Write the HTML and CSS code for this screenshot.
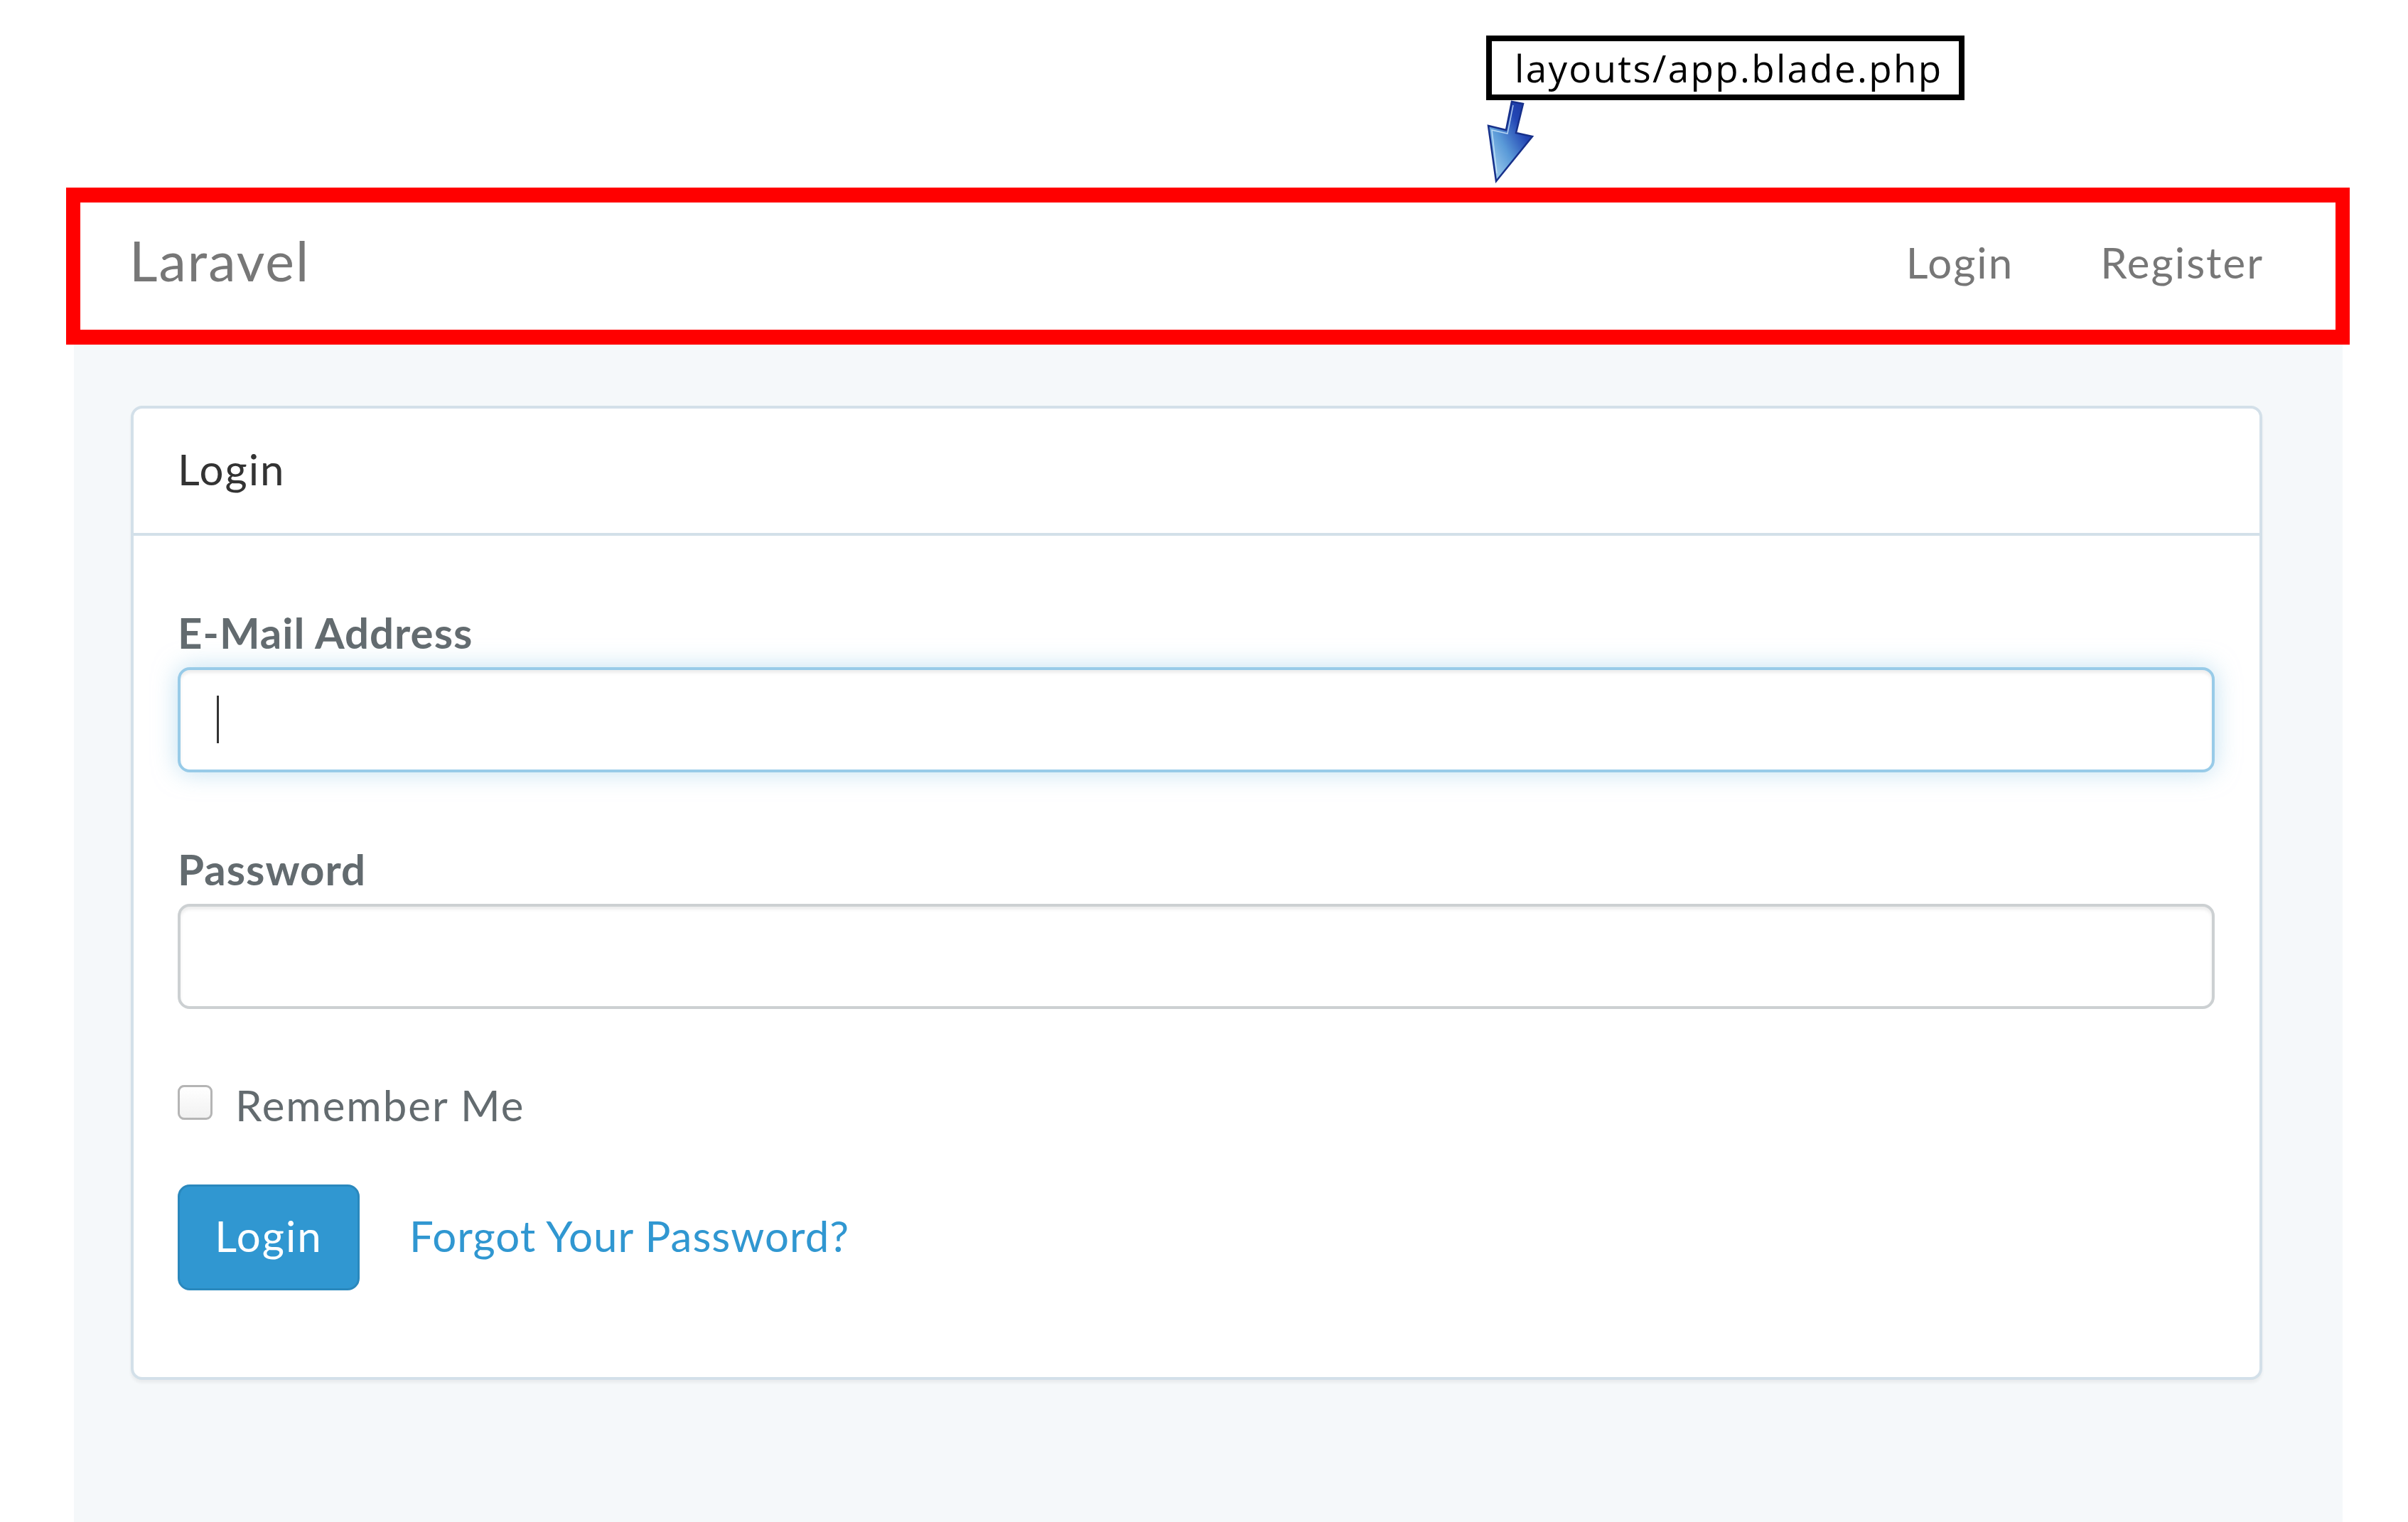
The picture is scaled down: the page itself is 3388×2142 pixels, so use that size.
FILE: index.html
```html
<!DOCTYPE html>
<html lang="en">
<head>
<meta charset="utf-8">
<title>Laravel – Login</title>
<link rel="stylesheet" href="styles.css">
</head>
<body>
<div class="shot">
  <div class="callout">layouts/app.blade.php</div>
  <svg class="arrow" viewBox="0 0 70 125" width="70" height="125" aria-hidden="true">
    <defs>
      <linearGradient id="arrowFill" x1="0" y1="1" x2="1" y2="0">
        <stop offset="0" stop-color="#b4dcf4"/>
        <stop offset="0.4" stop-color="#5a9ad8"/>
        <stop offset="0.7" stop-color="#2346b4"/>
        <stop offset="1" stop-color="#1a3399"/>
      </linearGradient>
    </defs>
    <polygon points="15,117 4,39 29,45 37,5 53,8 43,49 66,54" fill="url(#arrowFill)" stroke="#17308a" stroke-width="2.5" stroke-linejoin="miter"/>
    <polyline points="16,106 9,45 31,50 39,10" fill="none" stroke="#cfe8fb" stroke-width="1.5" opacity="0.8"/>
  </svg>

  <div class="app">
    <nav class="navbar">
      <a class="brand" href="#">Laravel</a>
      <ul class="nav-right">
        <li><a class="nav-link" href="#">Login</a></li>
        <li><a class="nav-link" href="#">Register</a></li>
      </ul>
    </nav>

    <main class="content">
      <section class="panel">
        <div class="panel-heading">Login</div>
        <form class="panel-body">
          <div class="form-group">
            <label class="label" for="email">E-Mail Address</label>
            <div class="field">
              <input id="email" class="control control-focus" type="email" name="email">
              <span class="caret"></span>
            </div>
          </div>

          <div class="form-group form-group-next">
            <label class="label" for="password">Password</label>
            <div class="field">
              <input id="password" class="control" type="password" name="password">
            </div>
          </div>

          <div class="check-row">
            <input id="remember" class="check" type="checkbox" name="remember">
            <label class="check-label" for="remember">Remember Me</label>
          </div>

          <div class="actions">
            <button class="btn" type="button">Login</button>
            <a class="forgot" href="#">Forgot Your Password?</a>
          </div>
        </form>
      </section>
    </main>
  </div>
</div>
</body>
</html>
```

FILE: styles.css
```css
* {
  box-sizing: border-box;
}

html,
body {
  margin: 0;
  padding: 0;
  background: #ffffff;
}

body {
  font-family: Lato, "Open Sans", sans-serif;
}

.shot {
  position: relative;
  width: 3388px;
  height: 2142px;
  overflow: hidden;
}

/* ---------- annotation overlay ---------- */
.callout {
  position: absolute;
  left: 2091px;
  top: 50px;
  width: 673px;
  height: 91px;
  border: 8px solid #000000;
  background: #ffffff;
  padding-left: 32px;
  font-family: "Open Sans", sans-serif;
  font-size: 53px;
  line-height: 75px;
  letter-spacing: 2.3px;
  color: #000000;
  white-space: nowrap;
}

.arrow {
  position: absolute;
  left: 2090px;
  top: 138px;
}

/* ---------- app ---------- */
.app {
  margin-left: 104px;
  width: 3192px;
  padding-top: 264px;
}

.navbar {
  display: flex;
  align-items: flex-start;
  height: 221px;
  margin: 0 -10px 0 -11px;
  border-style: solid;
  border-color: #ff0000;
  border-width: 21px 20px;
  background: #ffffff;
}

.brand {
  padding-left: 69px;
  font-size: 77px;
  line-height: 162px;
  letter-spacing: 2px;
  color: #777777;
  text-decoration: none;
}

.nav-right {
  display: flex;
  margin: 0 0 0 auto;
  padding: 0 40px 0 0;
  list-style: none;
}

.nav-link {
  display: block;
  padding: 0 61px;
  font-size: 60px;
  line-height: 168px;
  letter-spacing: 2px;
  color: #777777;
  text-decoration: none;
}

.content {
  height: 1657px;
  padding: 86px 113px 0 80px;
  background: #f5f8fa;
}

.panel {
  width: 2999px;
  background: #ffffff;
  border: 4px solid #d3e0e9;
  border-radius: 16px;
  box-shadow: 0 4px 4px rgba(0, 0, 0, 0.05);
}

.panel-heading {
  height: 179px;
  padding-left: 62px;
  border-bottom: 4px solid #d3e0e9;
  font-size: 60px;
  line-height: 170px;
  letter-spacing: 2px;
  color: #333333;
}

.panel-body {
  margin: 0;
  padding: 88px 63px 122px 62px;
}

.form-group-next {
  margin-top: 88px;
}

.label {
  display: block;
  margin-bottom: 1px;
  font-size: 60px;
  font-weight: 700;
  line-height: 96px;
  letter-spacing: 1px;
  color: #636b6f;
}

.field {
  position: relative;
}

.control {
  display: block;
  width: 100%;
  height: 148px;
  margin: 0;
  padding: 0 51px;
  border: 4px solid #ccd0d2;
  border-radius: 17px;
  background: #ffffff;
  box-shadow: inset 0 4px 4px rgba(0, 0, 0, 0.075);
  font-family: inherit;
  font-size: 60px;
  color: #555555;
  outline: none;
}

.control-focus {
  border-color: #98cbe8;
  box-shadow: inset 0 4px 4px rgba(0, 0, 0, 0.075), 0 0 34px rgba(152, 203, 232, 0.6);
}

.caret {
  position: absolute;
  left: 55px;
  top: 40px;
  width: 3px;
  height: 67px;
  background: #333333;
}

.check-row {
  display: flex;
  align-items: flex-start;
  height: 96px;
  margin-top: 87px;
}

.check {
  -webkit-appearance: none;
  appearance: none;
  flex: none;
  width: 49px;
  height: 49px;
  margin: 20px 0 0 0;
  border: 3px solid #b5b5b5;
  border-radius: 9px;
  background: linear-gradient(#ffffff, #f1f1f1);
}

.check-label {
  margin-left: 32px;
  font-size: 60px;
  line-height: 96px;
  letter-spacing: 2px;
  color: #636b6f;
}

.actions {
  display: flex;
  align-items: baseline;
  margin-top: 64px;
}

.btn {
  width: 256px;
  height: 149px;
  padding: 0 0 4px 0;
  border: 3px solid #2a88bd;
  border-radius: 17px;
  background: #3097d1;
  color: #ffffff;
  font-family: inherit;
  font-size: 60px;
  line-height: 139px;
  letter-spacing: 2px;
  text-align: center;
}

.forgot {
  margin-left: 70px;
  font-size: 60px;
  letter-spacing: 1px;
  color: #3097d1;
  text-decoration: none;
}
```
